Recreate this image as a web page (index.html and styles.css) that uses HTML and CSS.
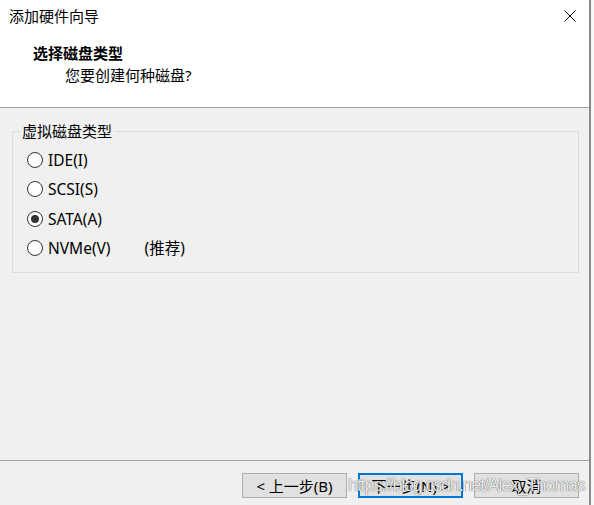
FILE: index.html
```html
<!DOCTYPE html>
<html lang="zh-CN">
<head>
<meta charset="utf-8">
<title>添加硬件向导</title>
<link rel="stylesheet" href="styles.css">
</head>
<body>
<div class="window">
  <header class="head">
    <div class="titlebar">
      <span class="title">添加硬件向导</span>
      <svg class="close" width="12" height="12" viewBox="0 0 12 12" aria-hidden="true">
        <path d="M0.5 0.5 L11.5 11.5 M11.5 0.5 L0.5 11.5" stroke="#000" stroke-width="1" fill="none"/>
      </svg>
    </div>
    <div class="heading">选择磁盘类型</div>
    <div class="subheading">您要创建何种磁盘?</div>
  </header>
  <main class="body">
    <fieldset class="group">
      <legend class="legend">虚拟磁盘类型</legend>
      <label class="radio"><span class="circle"></span>IDE(I)</label>
      <label class="radio"><span class="circle"></span>SCSI(S)</label>
      <label class="radio"><span class="circle checked"></span>SATA(A)</label>
      <label class="radio"><span class="circle"></span>NVMe(V)<span class="note">(推荐)</span></label>
    </fieldset>
  </main>
  <footer class="foot">
    <button class="btn">&lt; 上一步(B)</button>
    <button class="btn default">下一步(N) &gt;</button>
    <button class="btn">取消</button>
  </footer>
  <div class="watermark">https://blog.csdn.net/Alex_Thomas</div>
</div>
</body>
</html>
```

FILE: styles.css
```css
html, body {
  margin: 0;
  padding: 0;
}
body {
  background: #f7f7f7;
  width: 594px;
  height: 505px;
  overflow: hidden;
  font-family: "Noto Sans", "Noto Sans CJK SC", sans-serif;
  font-size: 15px;
  line-height: 20px;
  color: #000;
}
.window {
  position: relative;
  width: 591px;
  height: 505px;
  box-sizing: border-box;
  border-right: 2px solid #8a8a8a;
  background: #f0f0f0;
  display: flex;
  flex-direction: column;
}
.head {
  height: 108px;
  box-sizing: border-box;
  background: #fff;
  border-bottom: 1px solid #a0a0a0;
}
.titlebar {
  height: 32px;
  display: flex;
  align-items: center;
  justify-content: space-between;
  padding: 0 13px 0 9px;
}
.title {
  font-size: 15px;
}
.close {
  display: block;
}
.heading {
  margin-top: 11px;
  padding-left: 33px;
  font-weight: bold;
}
.subheading {
  margin-top: 2px;
  padding-left: 65px;
}
.body {
  flex: 1;
}
.group {
  margin: 13px 10px 0 12px;
  padding: 4px 0 9px 0;
  border: 1px solid #dcdcdc;
  min-width: 0;
}
.legend {
  margin-left: 7px;
  padding: 0 2px;
  line-height: 20px;
}
.radio {
  display: flex;
  align-items: center;
  height: 29.5px;
  padding-left: 14px;
  font-size: 15.5px;
}
.circle {
  width: 16px;
  height: 16px;
  box-sizing: border-box;
  border: 1px solid #333;
  border-radius: 50%;
  background: #fff;
  margin-right: 5px;
  display: flex;
  align-items: center;
  justify-content: center;
}
.circle.checked::after {
  content: "";
  width: 8px;
  height: 8px;
  border-radius: 50%;
  background: #333;
}
.note {
  margin-left: 34px;
}
.foot {
  height: 45px;
  box-sizing: border-box;
  border-top: 1px solid #a0a0a0;
  padding: 12px 10px 0 0;
  display: flex;
  justify-content: flex-end;
  align-items: flex-start;
  gap: 11px;
}
.btn {
  width: 105px;
  height: 25px;
  box-sizing: border-box;
  background: #e1e1e1;
  border: 1px solid #adadad;
  font-family: "Noto Sans", "Noto Sans CJK SC", sans-serif;
  font-size: 15px;
  line-height: 20px;
  color: #000;
  padding: 0;
}
.btn.default {
  border: 2px solid #0078d7;
}
.watermark {
  position: absolute;
  left: 348px;
  top: 473px;
  font-family: "Liberation Sans", Arial, sans-serif;
  font-size: 18px;
  letter-spacing: -1.2px;
  line-height: 24px;
  color: rgba(255, 255, 255, 0.9);
  text-shadow: 0 0 1px rgba(0, 0, 0, 0.6), 0 0 1px rgba(0, 0, 0, 0.3);
  white-space: nowrap;
  pointer-events: none;
}
```
